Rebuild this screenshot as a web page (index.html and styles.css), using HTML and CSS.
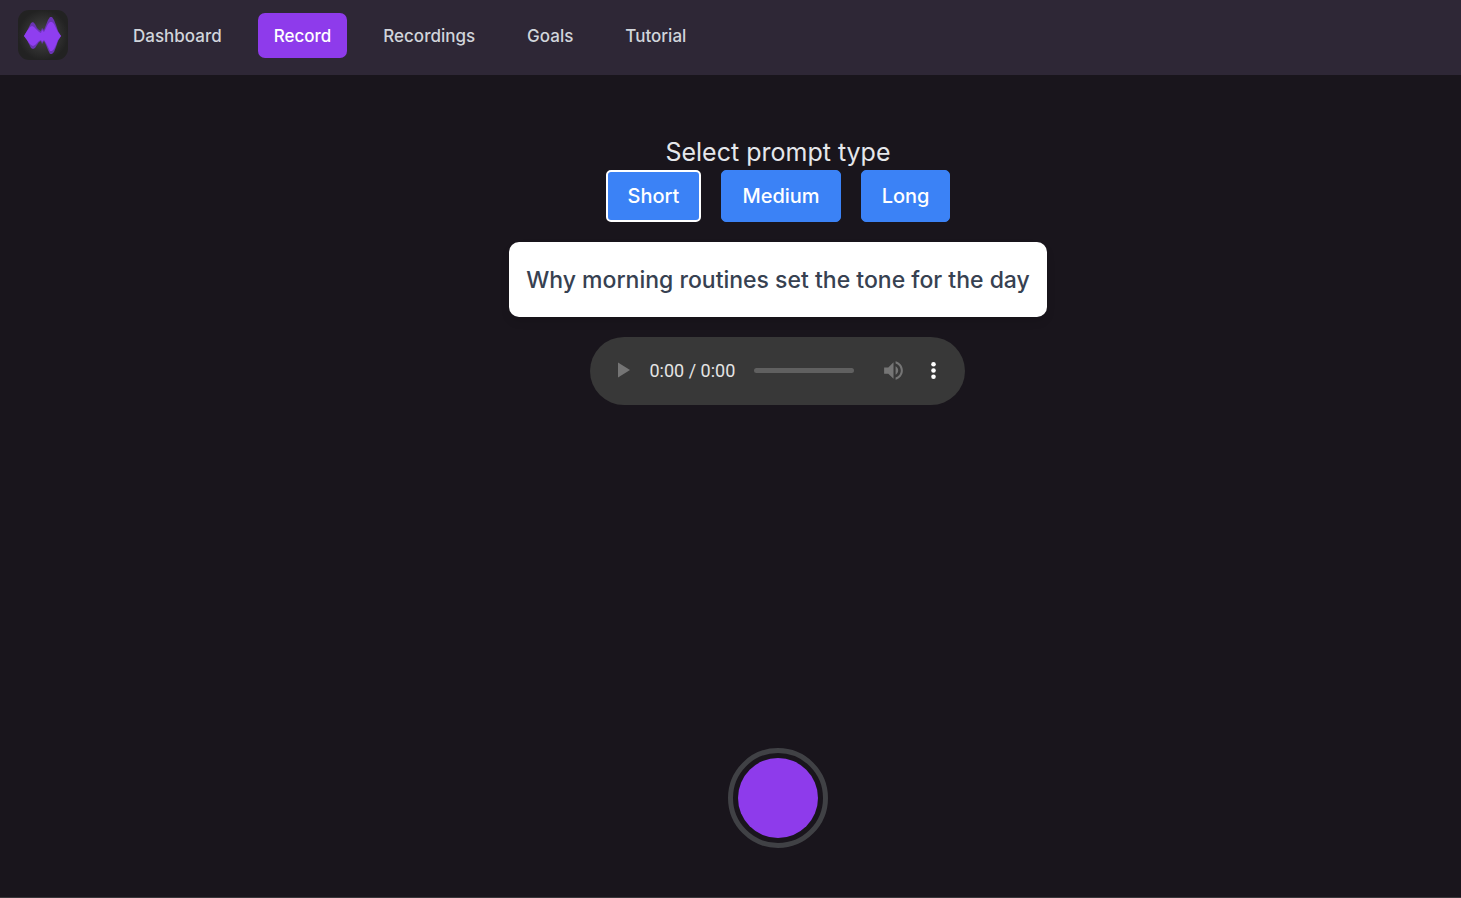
FILE: index.html
```html
<!DOCTYPE html>
<html lang="en">
<head>
<meta charset="utf-8">
<meta name="viewport" content="width=device-width, initial-scale=1">
<title>Record</title>
<link rel="stylesheet" href="styles.css">
</head>
<body>
<header class="topbar">
  <a class="logo" href="#" aria-label="Home">
    <svg viewBox="0 0 50 50" width="50" height="50" aria-hidden="true">
      <defs>
        <radialGradient id="tile"><stop offset="0" stop-color="#4a4a4a"/><stop offset=".5" stop-color="#353535"/><stop offset="1" stop-color="#222"/></radialGradient>
      </defs>
      <rect width="50" height="50" rx="11" fill="url(#tile)"/>
      <path fill="#6a34b4" d="M6 26 9 21 11 17 13 13 15 12 17 14 19 18 21 20 23 21 24 18 26 20 28 15 30 10 32 7 34 7 36 10 38 15 40 21 43 26 40 31 38 37 36 42 34 44 32 44 30 40 28 35 26 31 24 34 23 31 21 32 19 35 17 38 15 39 13 38 11 34 9 30Z"/>
      <path fill="#8f3ef0" d="M6 26 9 21 12 17 14 16 16 17 19 20 21 22 23 23 24 20 26 22 28 18 30 14 32 12 34 12 36 14 38 18 40 22 43 26 40 30 38 35 36 39 34 41 32 41 30 37 28 33 26 30 24 32 23 30 21 31 19 33 17 35 15 36 13 35 11 33 9 30Z"/>
    </svg>
  </a>
  <nav class="nav" aria-label="Main">
    <a class="nav-link" href="#">Dashboard</a>
    <a class="nav-link nav-link-active" href="#" aria-current="page">Record</a>
    <a class="nav-link" href="#">Recordings</a>
    <a class="nav-link" href="#">Goals</a>
    <a class="nav-link" href="#">Tutorial</a>
  </nav>
</header>
<main class="main">
  <section class="prompt">
    <h1 class="title">Select prompt type</h1>
    <div class="choices">
      <button class="choice choice-selected" type="button">Short</button>
      <button class="choice" type="button">Medium</button>
      <button class="choice" type="button">Long</button>
    </div>
    <p class="card">Why morning routines set the tone for the day</p>
    <div class="player">
      <button class="icon-button" type="button" aria-label="Play">
        <svg viewBox="0 0 24 24" width="24" height="24" fill="#757575"><path d="M6 4.500 18 12 6 19.500Z"/></svg>
      </button>
      <span class="time">0:00 / 0:00</span>
      <input class="seek" type="range" min="0" max="100" value="0" aria-label="Seek" disabled>
      <button class="icon-button" type="button" aria-label="Mute">
        <svg viewBox="0 0 24 24" width="25" height="25" fill="#757575"><path d="M3 9v6h4l5 5V4L7 9H3zm13.500 3c0-1.770-1.020-3.290-2.500-4.030v8.050c1.480-.73 2.500-2.250 2.500-4.020zM14 3.230v2.060c2.890.86 5 3.540 5 6.710s-2.110 5.850-5 6.710v2.060c4.010-.91 7-4.490 7-8.770s-2.990-7.860-7-8.770z"/></svg>
      </button>
      <button class="icon-button" type="button" aria-label="More options">
        <svg viewBox="0 0 24 24" width="25" height="25" fill="#fff"><circle cx="12" cy="6" r="2.200"/><circle cx="12" cy="12" r="2.200"/><circle cx="12" cy="18" r="2.200"/></svg>
      </button>
    </div>
  </section>
  <button class="record" type="button" aria-label="Start recording"></button>
</main>
</body>
</html>
```
FILE: styles.css
```css
* { box-sizing: border-box; }

body {
  margin: 0;
  min-height: 100vh;
  display: flex;
  flex-direction: column;
  background: #19151c;
  border-bottom: 1px solid #3a383b;
  color: #e5e7eb;
  font-family: Inter, "Liberation Sans", sans-serif;
}

button { font: inherit; cursor: pointer; }

.topbar {
  display: flex;
  align-items: flex-start;
  gap: 49px;
  padding: 10px 18px 15px;
  background: #2e2736;
}

.logo, .logo svg { display: block; }

.nav {
  display: flex;
  flex-wrap: wrap;
  gap: 20px;
  padding-top: 3px;
}

.nav-link {
  padding: 11px 16px 9px;
  border-radius: 7px;
  color: #d1d5db;
  font-size: 17px;
  font-weight: 500;
  line-height: 25px;
  text-decoration: none;
}

.nav-link-active { background: #8e3beb; color: #fff; }

.main {
  flex: 1;
  display: flex;
  flex-direction: column;
  align-items: center;
  justify-content: space-between;
  gap: 40px;
  padding: 60px 0 49px 95px;
}

.prompt {
  display: flex;
  flex-direction: column;
  align-items: center;
  gap: 20px;
}

.title {
  margin: 0 0 -20px;
  font-size: 25px;
  font-weight: 400;
  line-height: 35px;
}

.choices { display: flex; gap: 20px; }

.choice {
  padding: 11px 20px;
  border: 1px solid #3b82f6;
  border-radius: 5px;
  background: #3b82f6;
  color: #fff;
  font-size: 20px;
  font-weight: 500;
  line-height: 28px;
}

.choice-selected { padding: 10px 20px; border: 2px solid #fff; }

.card {
  margin: 0;
  padding: 21px 17px 19px;
  border-radius: 10px;
  background: #fff;
  box-shadow: 0 5px 8px rgba(0, 0, 0, .1);
  color: #374151;
  font-size: 23px;
  font-weight: 500;
  line-height: 35px;
}

.player {
  display: flex;
  align-items: center;
  width: 375px;
  max-width: 100%;
  padding: 13px 12px 15px 14px;
  border-radius: 34px;
  background: #383838;
}

.icon-button {
  display: flex;
  align-items: center;
  justify-content: center;
  width: 40px;
  height: 40px;
  padding: 0;
  border: 0;
  background: none;
}

.time {
  margin: 0 19px 0 5px;
  color: #e4e4e4;
  font-family: Roboto, sans-serif;
  font-size: 18px;
  line-height: 25px;
  white-space: nowrap;
}

.seek {
  appearance: none;
  flex: 1;
  min-width: 0;
  height: 5px;
  margin: 0 19px 0 0;
  border-radius: 3px;
  background: #606060;
}

.seek::-webkit-slider-thumb { appearance: none; width: 0; height: 0; }

.record {
  width: 100px;
  height: 100px;
  padding: 5px;
  border: 5px solid #404145;
  border-radius: 50%;
  background: #8e3beb content-box;
}
```
